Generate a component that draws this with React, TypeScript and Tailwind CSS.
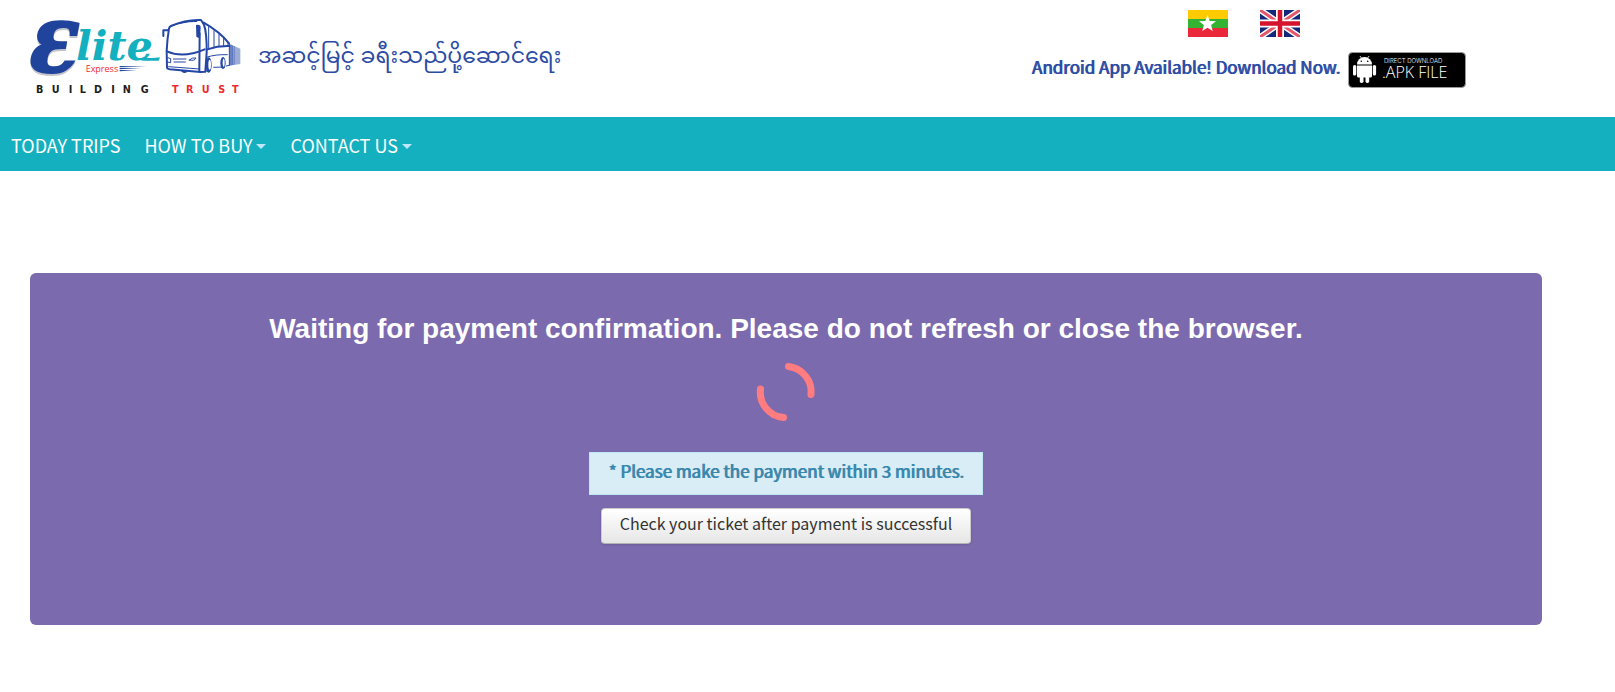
import { clsx } from "clsx";

const navItems = [
  { label: "TODAY TRIPS", href: "#trips", hasMenu: false },
  { label: "HOW TO BUY", href: "#how-to-buy", hasMenu: true },
  { label: "CONTACT US", href: "#contact", hasMenu: true },
];

export default function App() {
  return (
    <div className="min-h-screen bg-white font-['Noto_Sans_CJK_SC',sans-serif] text-[#333333]">
      <Header />
      <NavBar />
      <main className="pt-[102px] pr-[73px] pb-16 pl-[30px]">
        <PaymentPanel />
      </main>
    </div>
  );
}

function Header() {
  return (
    <header className="flex items-start justify-between pr-[149px] pb-3 pl-5">
      <a href="#home" className="flex items-center gap-2 pt-[10px]">
        <Logo />
        <span lang="my" className="text-[22px] leading-[36px] text-[#2c4ca4] font-['Noto_Sans_Myanmar','Padauk','Noto_Sans',sans-serif]">
          အဆင့်မြင့် ခရီးသည်ပို့ဆောင်ရေး
        </span>
      </a>
      <div className="flex flex-col items-center gap-[15px] pt-[10px]">
        <div className="flex gap-8">
          <button type="button" aria-label="Myanmar" className="cursor-pointer">
            <MyanmarFlag />
          </button>
          <button type="button" aria-label="English" className="cursor-pointer">
            <BritishFlag />
          </button>
        </div>
        <div className="flex items-start gap-2 pl-[10px]">
          <span className="pt-[3px] text-[17px] leading-[24px] text-[#2c4ca4] text-shadow-[1px_0_0_#2c4ca4]">
            Android App Available! Download Now.
          </span>
          <a href="#apk" aria-label="Direct download .APK file">
            <ApkBadge />
          </a>
        </div>
      </div>
    </header>
  );
}

function NavBar() {
  return (
    <nav className="flex h-[54px] items-center gap-6 bg-[#14b0bf] pt-px pl-[11px] text-[18px] leading-[24px] text-white">
      {navItems.map((item) => (
        <a key={item.label} href={item.href} className={clsx("flex items-center", item.hasMenu && "gap-1")}>
          {item.label}
          {item.hasMenu && (
            <svg width="10" height="5" viewBox="0 0 10 5" className="mt-1" aria-hidden="true">
              <path d="M0 0h10L5 5z" fill="#bfe6ff" />
            </svg>
          )}
        </a>
      ))}
    </nav>
  );
}

function PaymentPanel() {
  return (
    <section className="flex flex-col items-center rounded-md bg-[#7c6aae] pt-9 pb-[81px] text-center">
      <h1 className="font-['Liberation_Sans',Arial,sans-serif] text-[28px] leading-[40px] font-bold text-white">
        Waiting for payment confirmation. Please do not refresh or close the browser.
      </h1>
      <Spinner />
      <p className="mt-[30px] border border-[#bce8f1] bg-[#d9edf7] px-[18px] pt-[5px] pb-[11px] text-[17px] leading-[25px] text-[#3a87ad] text-shadow-[1px_0_0_#3a87ad]">
        * Please make the payment within 3 minutes.
      </p>
      <button
        type="button"
        className="mt-[13px] cursor-pointer rounded border border-[#cccccc] border-b-[#b3b3b3] bg-linear-to-b from-white to-[#e6e6e6] px-[18px] pt-[2px] pb-2 text-[16px] leading-[24px] shadow-sm"
      >
        Check your ticket after payment is successful
      </button>
    </section>
  );
}

function Spinner() {
  return (
    <svg width="60" height="60" viewBox="0 0 60 60" className="mt-[13px]" role="status" aria-label="Loading">
      <g fill="none" stroke="#ff7c81" strokeWidth="7" strokeLinecap="round">
        <path d="M32.500 4.500A25.500 25.500 0 0 1 55 32.500" />
        <path d="M27.500 55.500A25.500 25.500 0 0 1 4.500 27" />
      </g>
    </svg>
  );
}

function MyanmarFlag() {
  return (
    <svg width="40" height="27" viewBox="0 0 40 27" aria-hidden="true">
      <rect width="40" height="9" fill="#fecb00" />
      <rect y="9" width="40" height="9" fill="#34b233" />
      <rect y="18" width="40" height="9" fill="#ea2839" />
      <path d="M19.500 5l2.200 5.900 6.300.3-4.900 3.900 1.700 6-5.300-3.400-5.300 3.400 1.700-6-4.900-3.900 6.300-.3z" fill="#fff" />
    </svg>
  );
}

function BritishFlag() {
  return (
    <svg width="40" height="27" viewBox="0 0 40 27" aria-hidden="true">
      <rect width="40" height="27" fill="#14297a" />
      <path d="M0 0l40 27M40 0L0 27" stroke="#fff" strokeWidth="6" />
      <path d="M0 0l40 27M40 0L0 27" stroke="#e4566a" strokeWidth="3" />
      <path d="M20 0v27M0 13.500h40" stroke="#fff" strokeWidth="8" />
      <path d="M20 0v27M0 13.500h40" stroke="#d5132d" strokeWidth="4.500" />
    </svg>
  );
}

function ApkBadge() {
  return (
    <svg width="118" height="36" viewBox="0 0 118 36" aria-hidden="true">
      <rect x="0.500" y="0.500" width="117" height="35" rx="4" fill="#000" stroke="#999" />
      <g fill="#fff">
        <path d="M9 12.500a7.500 7.500 0 0 1 15 0z" />
        <path d="M12 4l2 3M21 4l-2 3" stroke="#fff" strokeWidth="0.800" />
        <path d="M9 13.500h15V24a1.500 1.500 0 0 1-1.500 1.500h-12A1.500 1.500 0 0 1 9 24z" />
        <rect x="5" y="13" width="3.300" height="10.500" rx="1.600" />
        <rect x="24.800" y="13" width="3.300" height="10.500" rx="1.600" />
        <rect x="11.800" y="23" width="3.700" height="8" rx="1.700" />
        <rect x="17.500" y="23" width="3.700" height="8" rx="1.700" />
      </g>
      <circle cx="13.300" cy="9.300" r="0.800" />
      <circle cx="19.700" cy="9.300" r="0.800" />
      <g fill="#fff">
        <text x="36" y="11" fontSize="6" fontFamily="Inter, sans-serif" fontWeight="300">DIRECT DOWNLOAD</text>
        <text x="34" y="26" fontSize="16" fontFamily="'Open Sans', sans-serif" fontWeight="300">.APK FILE</text>
      </g>
    </svg>
  );
}

function Logo() {
  return (
    <svg width="230" height="95" viewBox="0 0 690 285" role="img" aria-label="Elite Express, Building Trust">
      {/* wordmark */}
      <g fontFamily="'DejaVu Serif', serif" fontWeight="bold" fontStyle="italic">
        <text x="22" y="183" fontSize="194" fill="#20449b" stroke="#20449b" strokeWidth="12" className="drop-shadow-[0_6px_2px_#c4c4cc]">
          Ɛ
        </text>
        <text x="168" y="150" fontSize="124" fill="#14b0bf">lite</text>
      </g>
      <path d="M375 143q22 3 45-1l-4 10h-52z" fill="#14b0bf" />
      <text x="197" y="185" fontSize="27" fill="#ee2a30" fontFamily="'Open Sans', sans-serif">Express</text>
      <path d="M299 168l80 2-80 2zM299 174l64 1-64 3zM299 180l50 1-50 3z" fill="#20449b" />

      {/* bus */}
      <g fill="none" stroke="#2447a5" strokeWidth="6" strokeLinejoin="round" strokeLinecap="round">
        <path d="M447 55q-5 30-7 67l1 50q0 5 8 6l92 8 15-1 4-58q1-55-8-83l-9-14q-45-2-90 18-5 2-6 7z" />
        <path d="M441 124q48 22 113-6" />
        <path d="M453 48q40-15 77-14" strokeWidth="4" />
        <path d="M430 78V61h14" strokeWidth="6" />
        <path d="M551 38q48 27 76 62M562 118q32-11 66-10M539 70l-1 113" />
        <path d="M566 50v64M582 62v49M597 73v36M611 84v24M624 98v10" strokeWidth="3" />
        <path d="M460 147h38M462 156h34M508 150q10-9 20-6-4 10-20 6zM443 143l9 3v12l-9-2" strokeWidth="3" />
        <path d="M446 170l92 7M562 141q24-8 60-7M556 184l10-2M581 172l26-1M619 168l8-2" strokeWidth="3" />
      </g>
      <g fill="#2447a5">
        <path d="M528 45q14-3 14 8l-2 30q-8 2-11-4z" />
        <ellipse cx="566" cy="165" rx="9" ry="23" />
        <ellipse cx="609" cy="159" rx="8" ry="18" />
        <path d="M482 180l22 2q-4 8-12 7-8-1-10-9z" />
      </g>
      <ellipse cx="569" cy="164" rx="4" ry="15" fill="#fff" />
      <ellipse cx="611" cy="158" rx="3" ry="12" fill="#fff" />
      <path d="M627 101l34 15v46l-34 5z" fill="#2447a5" opacity="0.450" />
      <g stroke="#2447a5" strokeWidth="3">
        <path d="M628 101v66" />
        <path d="M633 104v62" opacity="0.800" />
        <path d="M638 106v59" opacity="0.600" />
        <path d="M643 108v56" opacity="0.400" />
      </g>

      {/* tagline, one position per letter */}
      <g fontFamily="'DejaVu Sans', sans-serif" fontWeight="bold" fontSize="29">
        <text x="48 95 146 179 222 274 308 362" y="249" fill="#1c1c1c">BUILDING</text>
        <text x="456 498 545 595 636" y="249" fill="#ee2a30">TRUST</text>
      </g>
    </svg>
  );
}
